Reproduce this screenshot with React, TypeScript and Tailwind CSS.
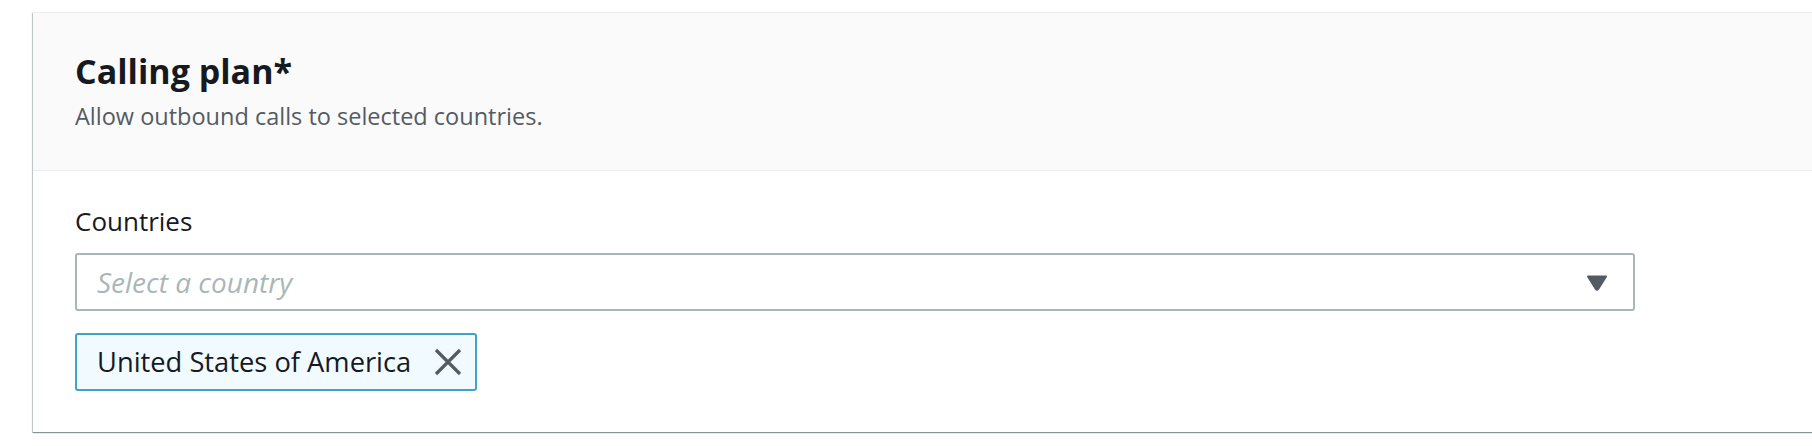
import React from 'react';

const font = { fontFamily: '"Open Sans", "Noto Sans", sans-serif' };

const CallingPlan: React.FC = () => {
  return (
    <div className="w-[1790px] bg-white border-t border-[#eaeded] shadow-[0_1px_1px_0_rgba(0,28,36,0.35),-1px_1px_1px_0_rgba(0,28,36,0.2)]">
      <div className="bg-[#fafafa] border-b border-[#eaeded] h-[158px] pl-[42px] pt-[38px]">
        <h2 className="text-[34px] leading-[40px] font-bold text-[#16191f]">Calling plan*</h2>
        <p className="text-[23.5px] leading-[30px] text-[#545b64] mt-[10px]">Allow outbound calls to selected countries.</p>
      </div>
      <div className="pl-[42px] pt-[34px] pb-[41px]">
        <label className="block text-[26px] leading-[32px] text-[#16191f]">Countries</label>
        <div className="mt-[16px] w-[1560px] h-[58px] border-2 border-[#aab7b8] rounded-[3px] flex items-center justify-between pl-[20px] pr-[25px]">
          <span className="italic text-[28px] text-[#aab7b8]">Select a country</span>
          <svg width="22" height="16" viewBox="0 0 22 16" className="mt-[2px]">
            <path d="M2 1.5 L20 1.5 L12.2 14 Q11 15.6 9.8 14 Z" fill="#545b64" stroke="#545b64" strokeWidth="2" strokeLinejoin="round" />
          </svg>
        </div>
        <div className="mt-[22px] inline-flex items-center h-[58px] border-2 border-[#44a1c9] rounded-[3px] bg-[#f1faff] pl-[20px] pr-[13px]">
          <span className="text-[27.3px] text-[#16191f]">United States of America</span>
          <svg width="28" height="28" viewBox="0 0 28 28" className="ml-[23px]">
            <path d="M2 2 L26 26 M26 2 L2 26" stroke="#545b64" strokeWidth="3.2" strokeLinecap="butt" />
          </svg>
        </div>
      </div>
    </div>
  );
};

export default function App() {
  return (
    <div className="w-[1812px] h-[446px] overflow-hidden bg-white pl-[33px] pt-[12px]" style={font}>
      <CallingPlan />
    </div>
  );
}
